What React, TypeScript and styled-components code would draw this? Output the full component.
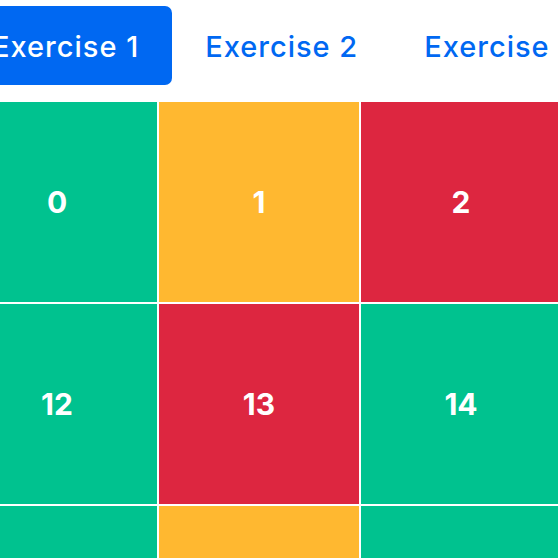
import React from "react";
import styled, { createGlobalStyle } from "styled-components";

const Global = createGlobalStyle`
  html, body { margin: 0; padding: 0; background: #ffffff; overflow: hidden; }
  body { font-family: Inter, "Open Sans", sans-serif; }
`;

const Page = styled.div`
  margin-left: -43px;
  padding-top: 6px;
  display: flex;
  flex-direction: column;
  gap: 17px;
`;

const TabBar = styled.div`
  display: flex;
  height: 79px;
  padding-left: 2px;
`;

const Tab = styled.button<{ $active?: boolean }>`
  flex: none;
  border: none;
  border-radius: 7px;
  padding: 2px 33px 0;
  height: 100%;
  font-family: Inter, "Open Sans", sans-serif;
  font-size: 29px;
  font-weight: 500;
  letter-spacing: 1px;
  white-space: nowrap;
  color: ${(p) => (p.$active ? "#ffffff" : "#0068f2")};
  background: ${(p) => (p.$active ? "#0068f2" : "transparent")};
`;

const Grid = styled.div`
  display: grid;
  grid-template-columns: repeat(12, 200px);
  grid-auto-rows: 200px;
  gap: 2px;
`;

const colors = {
  g: "#00c28f",
  y: "#ffb830",
  r: "#dd2640",
};

const Cell = styled.div<{ $c: keyof typeof colors }>`
  background: ${(p) => colors[p.$c]};
  display: flex;
  align-items: center;
  justify-content: center;
  color: #ffffff;
  font-size: 30px;
  font-weight: 700;
  font-family: Inter, "Open Sans", sans-serif;
`;

const pattern: (keyof typeof colors)[] = [
  "g", "y", "r", "g", "r", "y", "g", "g", "r", "y", "g", "r",
  "g", "r", "g", "y", "g", "r", "y", "g", "g", "r", "y", "g",
  "g", "y", "g", "r", "y", "g", "r", "g", "y", "g", "r", "y",
];

export default function App() {
  return (
    <>
      <Global />
      <Page>
        <TabBar>
          <Tab $active>Exercise 1</Tab>
          <Tab>Exercise 2</Tab>
          <Tab>Exercise 3</Tab>
        </TabBar>
        <Grid>
          {pattern.map((c, i) => (
            <Cell key={i} $c={c}>
              {i}
            </Cell>
          ))}
        </Grid>
      </Page>
    </>
  );
}
